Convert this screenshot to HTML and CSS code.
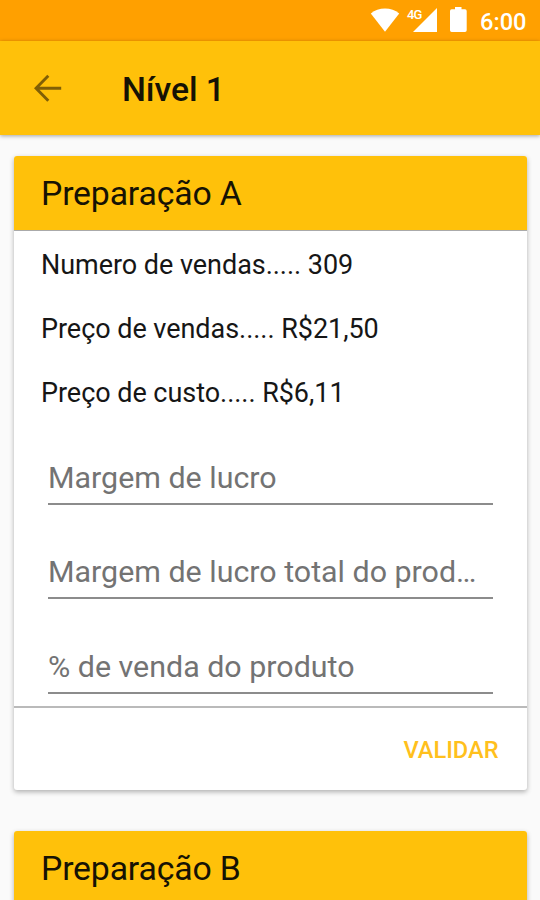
FILE: index.html
```html
<!DOCTYPE html>
<html lang="pt-BR">
<head>
    <meta charset="utf-8">
    <title>Nível 1</title>
    <link rel="stylesheet" href="styles.css">
</head>
<body>

<div class="status-bar">
    <svg class="wifi" width="30" height="24" viewBox="0 0 30 24">
        <path d="M15 23.7L.8 5.6C4.7 2.2 9.6.5 15 .5s10.3 1.7 14.2 5.1z" fill="#fff"/>
    </svg>
    <span class="network">
        <span class="network-type">4G</span>
        <svg width="24" height="24" viewBox="0 0 24 24">
            <path d="M0 24L24 0v24z" fill="#fff"/>
        </svg>
    </span>
    <svg class="battery" width="17" height="25" viewBox="0 0 17 25">
        <path d="M5 0h6.500v2.300h3.500a1.700 1.700 0 0 1 1.700 1.700v19.200a1.700 1.700 0 0 1-1.700 1.700H1.700A1.700 1.700 0 0 1 0 23.200V4a1.700 1.700 0 0 1 1.700-1.700H5z" fill="#fff"/>
    </svg>
    <span class="clock">6:00</span>
</div>

<header class="toolbar">
    <svg class="back" width="28" height="28" viewBox="0 0 28 28">
        <path d="M14.300 1.800L2 14.300l12.300 12.500M2 14.300h25.200" fill="none" stroke="#805f06" stroke-width="2.900"/>
    </svg>
    <h1>Nível 1</h1>
</header>

<main>
    <section class="card">
        <h2>Preparação A</h2>
        <div class="dados">
            <p>Numero de vendas..... 309</p>
            <p>Preço de vendas..... R$21,50</p>
            <p>Preço de custo..... R$6,11</p>
        </div>
        <form class="campos">
            <input type="text" placeholder="Margem de lucro">
            <input type="text" placeholder="Margem de lucro total do produto">
            <input type="text" placeholder="% de venda do produto">
        </form>
        <div class="acoes">
            <button type="button">VALIDAR</button>
        </div>
    </section>

    <section class="card">
        <h2>Preparação B</h2>
    </section>
</main>

</body>
</html>
```

FILE: styles.css
```css
* {
    box-sizing: border-box;
}

body, html {
    height: 100%;
    margin: 0;
    padding: 0;
    overflow: hidden;
}

body {
    display: flex;
    flex-direction: column;
    font-family: Roboto, sans-serif;
    color: #161616;
    background-color: #fafafa;
}

h1, h2, p {
    margin: 0;
}

/* Barra de status */
.status-bar {
    display: flex;
    flex: none;
    align-items: flex-start;
    justify-content: flex-end;
    height: 41px;
    padding: 8px 14px 0 0;
    background-color: #ffa000;
}

.network {
    position: relative;
    height: 24px;
    margin-left: 13px;
}

.network-type {
    position: absolute;
    left: -6px;
    top: 0;
    font-size: 13px;
    font-weight: 500;
    line-height: 13px;
    letter-spacing: -1px;
    color: #fff;
}

.battery {
    margin: -1px 0 0 13px;
}

.clock {
    width: 46px;
    margin-left: 13px;
    font-size: 23.6px;
    font-weight: 500;
    line-height: 28px;
    color: #fff;
}

/* Topo */
.toolbar {
    display: flex;
    flex: none;
    align-items: center;
    height: 94px;
    padding-left: 34px;
    background-color: #ffc10a;
    box-shadow: 0 1px 4px rgba(0, 0, 0, 0.35);
}

.toolbar h1 {
    margin-left: 60px;
    padding-top: 2px;
    font-size: 33.75px;
    font-weight: 500;
    letter-spacing: -0.1px;
    color: #161204;
}

main {
    flex: 1;
    min-height: 0;
    padding: 20.5px 13.5px 0 14px;
}

/* Cartões */
.card {
    margin-bottom: 41px;
    border-radius: 3px;
    overflow: hidden;
    background-color: #fff;
    box-shadow: 0 2px 5px rgba(0, 0, 0, 0.3);
}

.card h2 {
    height: 75px;
    padding-left: 27px;
    border-bottom: 1px solid #aaa;
    font-size: 33.75px;
    font-weight: 400;
    line-height: 76px;
    letter-spacing: -0.15px;
    color: #161204;
    background-color: #ffc10a;
}

.dados {
    padding: 2px 27px 0;
}

.dados p {
    font-size: 27px;
    line-height: 64px;
    letter-spacing: -0.04px;
}

.campos {
    display: flex;
    flex-direction: column;
    gap: 41.5px;
    padding: 27.4px 34px 12.6px;
}

.campos input {
    width: 100%;
    height: 53px;
    padding: 0;
    border: 0;
    border-bottom: 2px solid #8c8c8c;
    outline: 0;
    font-family: inherit;
    font-size: 30.4px;
    background: none;
    text-overflow: ellipsis;
}

.campos input::placeholder {
    color: #737373;
    opacity: 1;
    text-overflow: ellipsis;
}

.acoes {
    display: flex;
    justify-content: flex-end;
    height: 83.5px;
    padding-right: 28px;
    border-top: 2px solid #bababa;
}

.acoes button {
    padding: 2px 0 0;
    border: 0;
    font-family: inherit;
    font-size: 23.6px;
    font-weight: 500;
    color: #ffc01c;
    background: none;
}
```
